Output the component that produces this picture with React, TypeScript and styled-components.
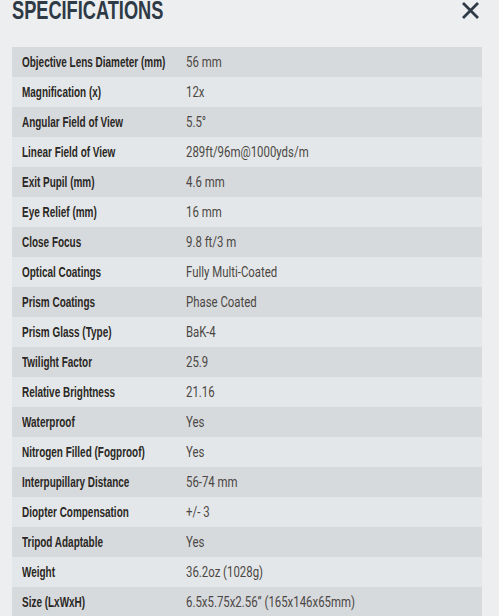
import React from "react";
import styled, { createGlobalStyle } from "styled-components";

const GlobalStyle = createGlobalStyle`
  html, body {
    margin: 0;
    padding: 0;
    background: #eceef0;
  }
  body {
    font-family: Roboto, "Liberation Sans", sans-serif;
  }
`;

const Panel = styled.div`
  width: 499px;
  height: 616px;
  overflow: hidden;
  background: #eceef0;
`;

const Header = styled.div`
  display: flex;
  justify-content: space-between;
  align-items: flex-start;
  height: 47px;
  padding: 0 19px 0 12px;
  box-sizing: border-box;
`;

const Title = styled.h2`
  margin: 0;
  margin-top: -5px;
  font-family: "Liberation Sans", Arial, sans-serif;
  font-weight: 700;
  font-size: 26px;
  line-height: 30px;
  color: #2e3a46;
  white-space: nowrap;
  transform: scaleX(0.7);
  transform-origin: left center;
`;

const CloseButton = styled.button`
  border: none;
  background: none;
  padding: 0;
  margin-top: 1px;
  width: 19px;
  height: 19px;
  cursor: pointer;
  display: flex;
`;

const Table = styled.div`
  margin-left: 12px;
  width: 470px;
`;

const Row = styled.div<{ $dark: boolean }>`
  display: grid;
  grid-template-columns: 174px 1fr;
  align-items: center;
  height: 30px;
  background: ${(p) => (p.$dark ? "#d7dadd" : "#e4e7e9")};
`;

const Label = styled.div`
  padding-left: 10px;
  margin-top: -1px;
  font-family: "Liberation Sans", Arial, sans-serif;
  font-weight: 700;
  font-size: 15px;
  color: #2a2724;
  white-space: nowrap;
  transform: scaleX(0.664);
  transform-origin: 10px center;
`;

const Value = styled.div`
  margin-top: -1px;
  font-family: Roboto, "Liberation Sans", sans-serif;
  font-weight: 400;
  font-size: 15px;
  color: #4b4744;
  white-space: nowrap;
  transform: scaleX(0.76);
  transform-origin: left center;
`;

const specs: [string, string][] = [
  ["Objective Lens Diameter (mm)", "56 mm"],
  ["Magnification (x)", "12x"],
  ["Angular Field of View", "5.5°"],
  ["Linear Field of View", "289ft/96m@1000yds/m"],
  ["Exit Pupil (mm)", "4.6 mm"],
  ["Eye Relief (mm)", "16 mm"],
  ["Close Focus", "9.8 ft/3 m"],
  ["Optical Coatings", "Fully Multi-Coated"],
  ["Prism Coatings", "Phase Coated"],
  ["Prism Glass (Type)", "BaK-4"],
  ["Twilight Factor", "25.9"],
  ["Relative Brightness", "21.16"],
  ["Waterproof", "Yes"],
  ["Nitrogen Filled (Fogproof)", "Yes"],
  ["Interpupillary Distance", "56-74 mm"],
  ["Diopter Compensation", "+/- 3"],
  ["Tripod Adaptable", "Yes"],
  ["Weight", "36.2oz (1028g)"],
  ["Size (LxWxH)", "6.5x5.75x2.56\u201d (165x146x65mm)"],
];

export default function App() {
  return (
    <Panel>
      <GlobalStyle />
      <Header>
        <Title>SPECIFICATIONS</Title>
        <CloseButton aria-label="Close">
          <svg width="19" height="19" viewBox="0 0 19 19">
            <path d="M2 2 L17 17 M17 2 L2 17" stroke="#2e3a46" strokeWidth="2.8" strokeLinecap="butt" />
          </svg>
        </CloseButton>
      </Header>
      <Table>
        {specs.map(([label, value], i) => (
          <Row key={label} $dark={i % 2 === 0}>
            <Label>{label}</Label>
            <Value>{value}</Value>
          </Row>
        ))}
      </Table>
    </Panel>
  );
}
